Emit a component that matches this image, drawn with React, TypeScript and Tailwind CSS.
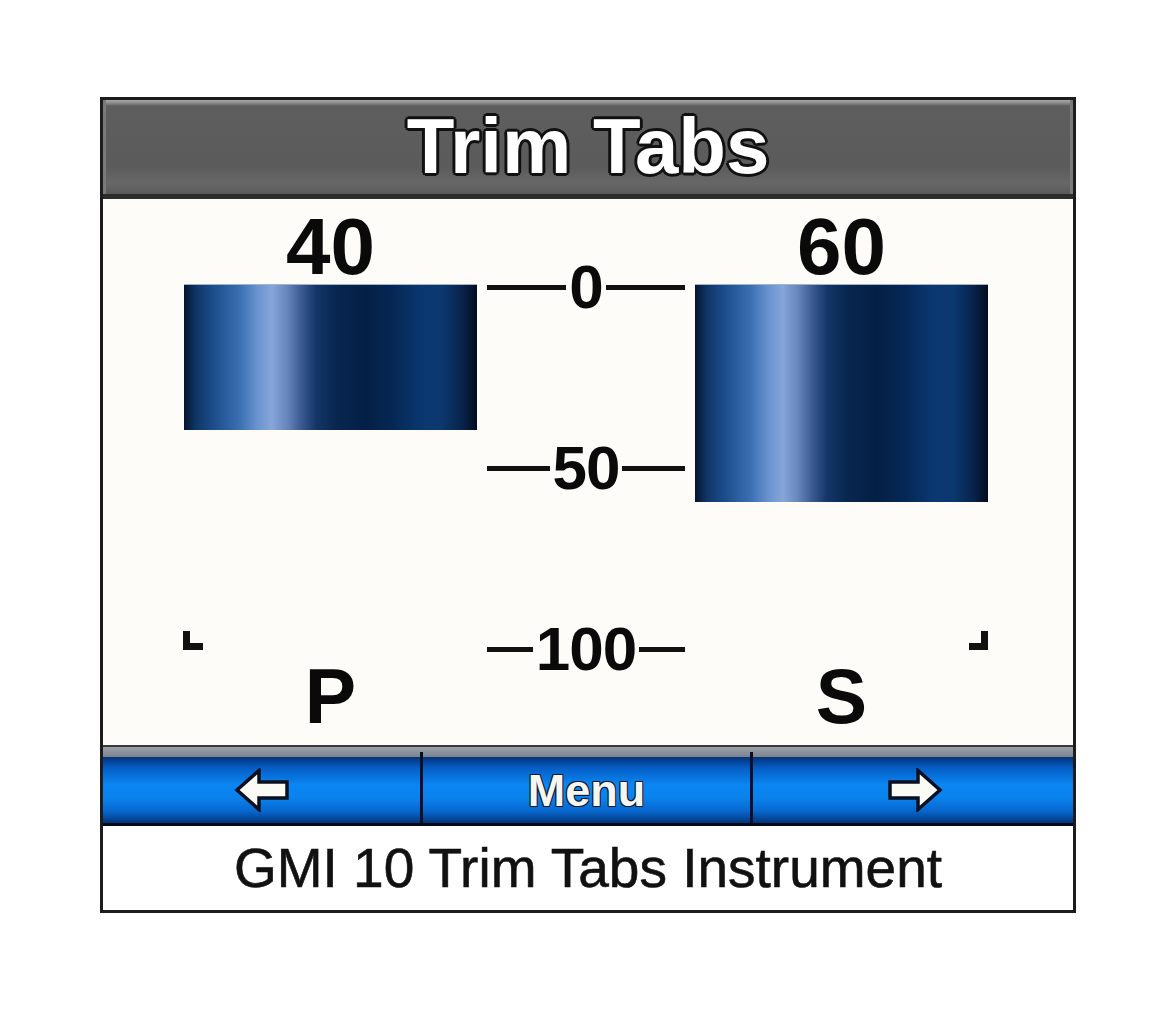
import React from 'react'

const SCALE = 3.64
const TICK = 3.62

const barGradient =
  'bg-[linear-gradient(90deg,#06142c_0%,#0f3566_4%,#1f5190_11%,#3a6fb2_19%,#6a93cf_25%,#86a5da_30%,#6787bd_35%,#3b5a92_40%,#143668_45%,#08264e_52%,#041f45_62%,#062856_72%,#0a3770_81%,#0b386f_88%,#08234b_95%,#030b1e_100%)]'

const outline =
  '[text-shadow:2px_2px_0_#111,-2px_-2px_0_#111,2px_-2px_0_#111,-2px_2px_0_#111,0_3px_0_#111,3px_0_0_#111,0_-3px_0_#111,-3px_0_0_#111]'

function Arrow({ dir }: { dir: 'left' | 'right' }) {
  return (
    <svg
      width="56"
      height="44"
      viewBox="0 0 56 44"
      className={dir === 'right' ? 'scale-x-[-1]' : ''}
    >
      <path
        d="M3 22 L25 2.5 L25 14 L53 14 L53 30 L25 30 L25 41.5 Z"
        fill="#fbfbf6"
        stroke="#0a1020"
        strokeWidth="3.5"
        strokeLinejoin="miter"
      />
    </svg>
  )
}

function TabColumn({
  value,
  label,
  corner,
}: {
  value: number
  label: string
  corner: 'left' | 'right'
}) {
  return (
    <div className="flex flex-col">
      {/* value */}
      <div className="h-[85px] pt-[8px] text-center text-[80px] font-bold leading-none text-[#0a0a0a]">
        {value}
      </div>

      {/* bar area, 0 at top, 100 at bottom */}
      <div className="relative h-[366px]">
        <div
          className={`w-full ${barGradient} shadow-[inset_0_1px_0_#9fb3d3]`}
          style={{ height: `${value * SCALE}px` }}
        />
        {corner === 'left' ? (
          <div className="absolute bottom-0 left-[-1px] h-[19px] w-[20px] border-b-[7px] border-l-[7px] border-[#111]" />
        ) : (
          <div className="absolute bottom-0 right-0 h-[19px] w-[19px] border-b-[7px] border-r-[7px] border-[#111]" />
        )}
      </div>

      {/* side label */}
      <div className="pt-[8px] text-center text-[77px] font-bold leading-none text-[#0a0a0a]">
        {label}
      </div>
    </div>
  )
}

function Tick({ value }: { value: number }) {
  const center = 88 + value * TICK
  return (
    <div
      className="absolute left-0 right-0 flex items-center"
      style={{ top: `${center - 30}px`, height: '60px' }}
    >
      <div className="h-[5px] flex-1 bg-[#111]" />
      <span className="px-[3px] text-[62px] font-bold leading-none tracking-[-1px] text-[#0a0a0a]">
        {value}
      </span>
      <div className="h-[5px] flex-1 bg-[#111]" />
    </div>
  )
}

export default function App() {
  return (
    <div
      className="min-h-[1012px] w-[1176px] bg-white pl-[100px] pt-[97px]"
      style={{ fontFamily: '"Liberation Sans", Arial, sans-serif' }}
    >
      <div className="flex w-[976px] flex-col border-[3px] border-[#1c1c1c]">
        {/* Header */}
        <header className="flex h-[99px] items-center justify-center border-b-[5px] border-[#2c2c2c] bg-[linear-gradient(180deg,#a9a9a9_0px,#8a8a8a_3px,#5e5e5e_6px,#5b5b5b_70%,#676767_88%,#5a5a5a_100%)] pb-[2px] shadow-[inset_3px_0_0_#7a7a7a,inset_-3px_0_0_#7a7a7a]">
          <h1 className={`text-[78px] font-bold leading-none text-white ${outline}`}>
            Trim Tabs
          </h1>
        </header>

        {/* Gauge */}
        <main className="grid h-[546px] grid-cols-[293px_198px_293px] gap-x-[10px] bg-[#fdfcf8] pl-[81px] pr-[85px]">
          <TabColumn value={40} label="P" corner="left" />
          <div className="relative">
            <Tick value={0} />
            <Tick value={50} />
            <Tick value={100} />
          </div>
          <TabColumn value={60} label="S" corner="right" />
        </main>

        {/* Soft keys */}
        <div className="flex flex-col border-t-[2px] border-[#3a3a3a]">
          <div className="h-[10px] bg-[linear-gradient(180deg,#9aa0a8,#7b838e)]" />
          <div className="grid h-[69px] grid-cols-[317px_3px_327px_3px_320px] border-b-[3px] border-[#050a14] bg-[linear-gradient(180deg,#04337a_0%,#0560c8_18%,#0a86f2_42%,#0a82ec_62%,#0767cf_82%,#03357a_100%)]">
            <div className="flex items-center justify-center">
              <Arrow dir="left" />
            </div>
            <div className="mt-[-5px] bg-[#061020]" />
            <div className="flex items-center justify-center">
              <span className="text-[45px] font-bold leading-none text-[#f6f6f0] [text-shadow:1px_1px_0_#0a1a30,-1px_-1px_0_#0a1a30,1px_-1px_0_#0a1a30,-1px_1px_0_#0a1a30]">
                Menu
              </span>
            </div>
            <div className="mt-[-5px] bg-[#061020]" />
            <div className="flex items-center justify-center pl-[4px]">
              <Arrow dir="right" />
            </div>
          </div>

          {/* Caption */}
          <div className="flex h-[84px] items-center justify-center bg-white">
            <span className="text-[55px] leading-none text-[#111] [-webkit-text-stroke:0.6px_#111]">
              GMI 10 Trim Tabs Instrument
            </span>
          </div>
        </div>
      </div>
    </div>
  )
}
